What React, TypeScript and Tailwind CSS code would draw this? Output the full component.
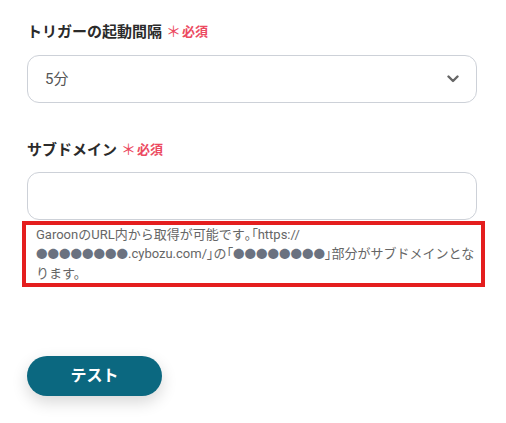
import React from "react";

const font = { fontFamily: "Roboto, 'Noto Sans CJK JP', sans-serif" };

function Label({ text }: { text: string }) {
  return (
    <div className="flex h-[22px] items-center">
      <span className="text-[15px] font-bold text-[#2b2b2b]">{text}</span>
      <span className="ml-[4px] text-[15px] font-normal leading-none text-[#ec4a61]">＊</span>
      <span className="ml-[1px] text-[13px] font-bold text-[#ec4a61]">必須</span>
    </div>
  );
}

function Dots() {
  return <span className="text-[11.5px] text-[#6b7280]">●●●●●●●●</span>;
}

function P({ children }: { children: React.ReactNode }) {
  return <span className="[font-feature-settings:'palt']">{children}</span>;
}

export default function App() {
  return (
    <div className="min-h-[423px] w-[506px] bg-white" style={font}>
      <div className="flex w-[504px] flex-col px-[27px] pt-[21px]">
        <Label text="トリガーの起動間隔" />
        <div className="mt-[12px] flex h-[48px] items-center justify-between rounded-[12px] border border-[#cdd1d8] pl-[17px] pr-[16px]">
          <span className="text-[15px] text-[#555]">5分</span>
          <svg width="12" height="8" viewBox="0 0 12 8" className="mr-[1px]">
            <path d="M1.5 1.5 L6 6 L10.5 1.5" fill="none" stroke="#666" strokeWidth="2.4" strokeLinecap="round" strokeLinejoin="round" />
          </svg>
        </div>

        <div className="mt-[36px]">
          <Label text="サブドメイン" />
        </div>
        <div className="mt-[11px] h-[48px] rounded-[12px] border border-[#cdd1d8]" />
        <div className="-ml-[5px] mt-[1px] w-[463px] border-4 border-[#e41e1e] pl-[10px] pr-[6px] text-[13px] leading-[19px] text-[#666]">
          <div className="whitespace-nowrap">
            GaroonのURL内から取得が可能です<P>。「</P>https://
          </div>
          <div className="whitespace-nowrap">
            <Dots />.cybozu.com/<P>」</P>の<P>「</P><Dots /><P>」</P>部分がサブドメインとな
          </div>
          <div className="whitespace-nowrap">ります。</div>
        </div>

        <div className="mt-[69px]">
          <button className="flex h-[40px] w-[135px] items-center justify-center rounded-full bg-[#0b6880] text-[16px] font-bold text-white shadow-[0_6px_16px_rgba(0,0,0,0.16)]">
            テスト
          </button>
        </div>
      </div>
    </div>
  );
}
